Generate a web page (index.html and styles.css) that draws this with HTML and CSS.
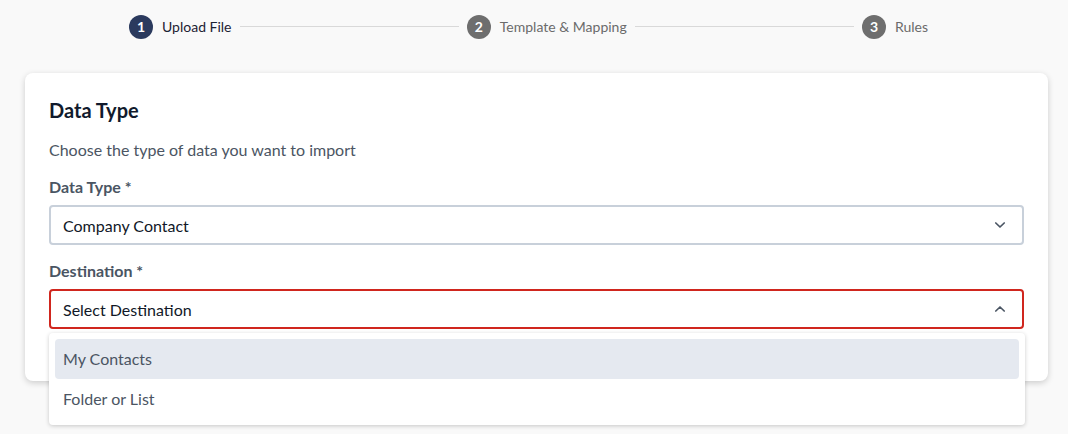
FILE: index.html
```html
<!DOCTYPE html>
<html lang="en">
<head>
  <meta charset="UTF-8">
  <meta name="viewport" content="width=device-width, initial-scale=1.0">
  <title>Import Data</title>
  <link rel="stylesheet" href="styles.css">
</head>
<body>
  <div class="stepper">
    <div class="step active">
      <span class="step-num">1</span>
      <span class="step-label">Upload File</span>
    </div>
    <div class="step-line"></div>
    <div class="step">
      <span class="step-num">2</span>
      <span class="step-label">Template &amp; Mapping</span>
    </div>
    <div class="step-line"></div>
    <div class="step">
      <span class="step-num">3</span>
      <span class="step-label">Rules</span>
    </div>
  </div>

  <div class="card">
    <h2>Data Type</h2>
    <p class="desc">Choose the type of data you want to import</p>

    <label class="field-label">Data Type *</label>
    <div class="select">
      <span>Company Contact</span>
      <svg class="chevron" width="12" height="8" viewBox="0 0 12 8"><path d="M1.8 2 6 6l4.2-4" fill="none" stroke="#4a5563" stroke-width="1.7" stroke-linecap="round" stroke-linejoin="round"/></svg>
    </div>

    <label class="field-label">Destination *</label>
    <div class="select-wrap">
      <div class="select open">
        <span>Select Destination</span>
        <svg class="chevron" width="12" height="8" viewBox="0 0 12 8"><path d="M1.8 6 6 2l4.2 4" fill="none" stroke="#4a5563" stroke-width="1.7" stroke-linecap="round" stroke-linejoin="round"/></svg>
      </div>
      <ul class="menu">
        <li class="hover">My Contacts</li>
        <li>Folder or List</li>
      </ul>
    </div>
  </div>
</body>
</html>
```

FILE: styles.css
```css
html, body {
  min-height: 100vh;
}
body {
  margin: 0;
  background-color: #f9f9f9;
  font-family: Lato, "Open Sans", sans-serif;
  color: #1f2937;
}

/* steps across the top */
.stepper {
  display: flex;
  align-items: center;
  gap: 8px;
  height: 53px;
  margin: 0 140px 20px 129px;
}
.step {
  display: flex;
  align-items: center;
  gap: 9px;
  font-size: 14px;
  color: #6b6b6b;
}
.step-num {
  width: 24px;
  height: 24px;
  border-radius: 50%;
  background-color: #6e6e6e;
  color: #fff;
  font-size: 14px;
  font-weight: bold;
  display: flex;
  align-items: center;
  justify-content: center;
}
.step.active { color: #1c2233; }
.step.active .step-num { background-color: #2b3a5e; }
.step-line {
  flex: 1;
  height: 1px;
  background-color: #d9d9d9;
}

.card {
  margin: 0 20px 0 25px;
  padding: 24px 24px 52px;
  background-color: white;
  border-radius: 8px;
  box-shadow: 0 2px 6px rgba(0,0,0,0.18);
}
.card h2 {
  margin: 0;
  font-size: 20px;
  line-height: 27px;
  font-weight: bold;
  color: #111a2c;
}
.desc {
  margin: 14px 0 15px;
  font-size: 16px;
  line-height: 24px;
  color: #4b5563;
}
.field-label {
  display: block;
  margin-bottom: 8px;
  font-size: 16px;
  line-height: 20px;
  font-weight: bold;
  color: #4a5563;
}

.select {
  display: flex;
  align-items: center;
  justify-content: space-between;
  height: 40px;
  box-sizing: border-box;
  padding: 0 16px 0 12px;
  border: 2px solid #c8d0da;
  border-radius: 4px;
  font-size: 16px;
  color: #111827;
  margin-bottom: 16px;
}
.select.open {
  border-color: #d0261e;
  margin-bottom: 0;
}

.select-wrap { position: relative; }
.menu {
  position: absolute;
  z-index: 2;
  top: 44px;
  left: 0;
  right: -1px;
  margin: 0;
  padding: 6px;
  list-style: none;
  background-color: white;
  border-radius: 4px;
  box-shadow: 0 1px 4px rgba(0,0,0,0.2);
}
.menu li {
  height: 40px;
  line-height: 40px;
  padding-left: 8px;
  border-radius: 4px;
  font-size: 16px;
  color: #4b5563;
}
.menu li.hover { background-color: #e5e9f0; }
```
